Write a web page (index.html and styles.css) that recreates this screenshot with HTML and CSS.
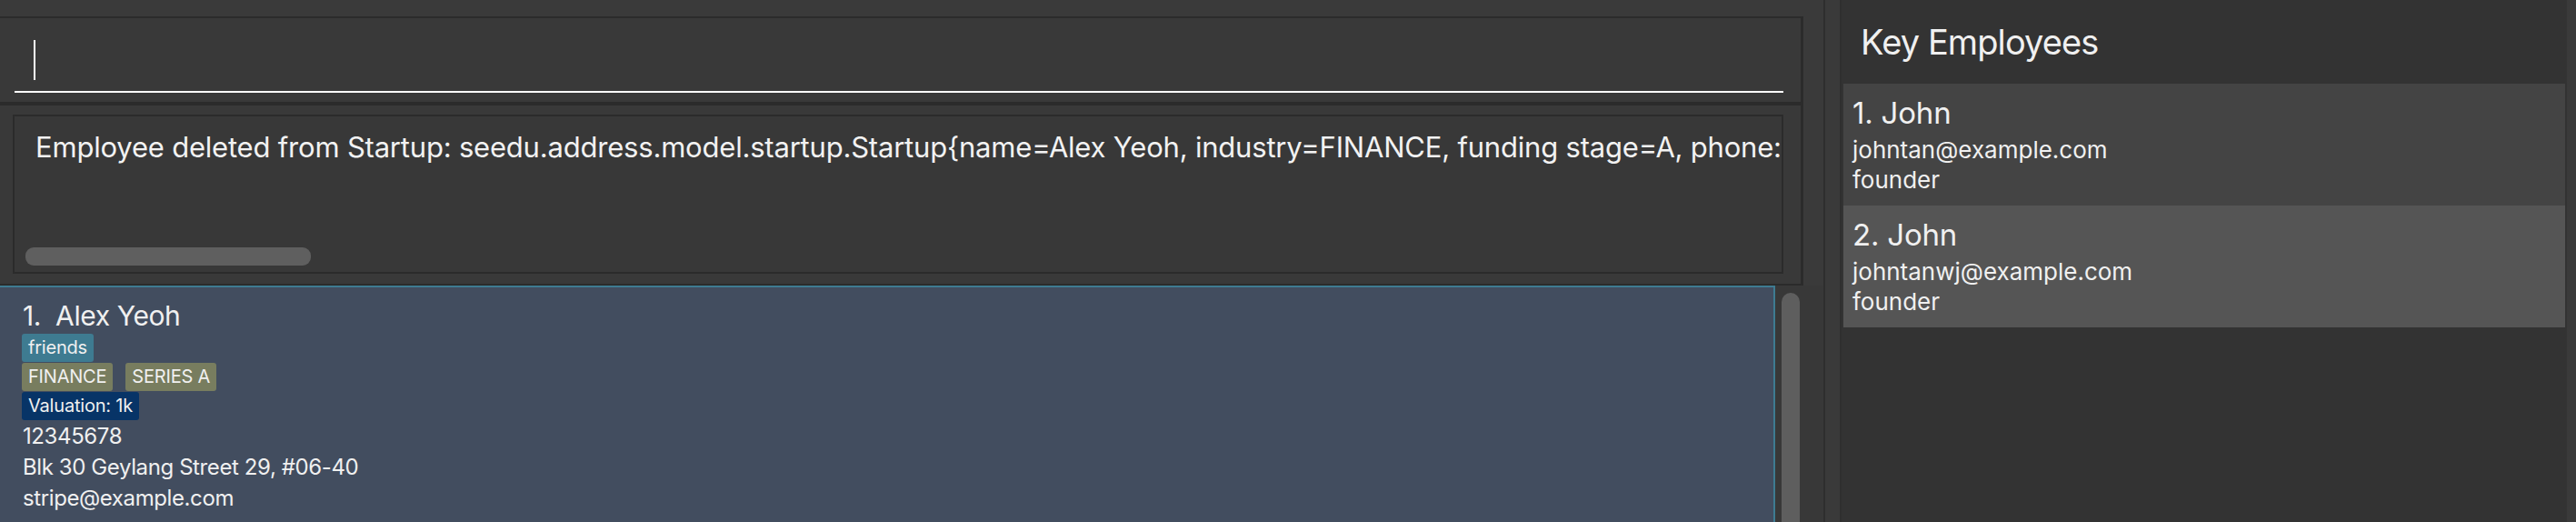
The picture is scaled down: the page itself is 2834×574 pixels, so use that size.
FILE: index.html
```html
<!DOCTYPE html>
<html>
<head>
<meta charset="utf-8">
<link rel="stylesheet" href="styles.css">
</head>
<body>
<div class="app">
  <div class="main-col">
    <div class="top-strip"></div>
    <div class="command-box">
      <div class="command-field"><span class="caret"></span></div>
    </div>
    <div class="result-panel">
      <div class="result-display">
        <div class="result-text">Employee deleted from Startup: seedu.address.model.startup.Startup{name=Alex Yeoh, industry=FINANCE, funding stage=A, phone: 12345678, email: stripe@example.com, address: Blk 30 Geylang Street 29, #06-40, valuation: 1k, tags: [friends]}</div>
        <div class="h-scroll"><div class="h-thumb"></div></div>
      </div>
    </div>
    <div class="list-area">
      <div class="startup-card">
        <div class="card-name">1.  Alex Yeoh</div>
        <div class="tag-row"><span class="tag tag-friend">friends</span></div>
        <div class="tag-row"><span class="tag tag-olive">FINANCE</span><span class="tag tag-olive">SERIES A</span></div>
        <div class="tag-row"><span class="tag tag-navy">Valuation: 1k</span></div>
        <div class="card-line">12345678</div>
        <div class="card-line">Blk 30 Geylang Street 29, #06-40</div>
        <div class="card-line">stripe@example.com</div>
      </div>
      <div class="v-scroll"></div>
    </div>
  </div>
  <div class="divider"></div>
  <div class="gutter"></div>
  <div class="side-panel">
    <div class="side-title">Key Employees</div>
    <div class="emp-card emp-odd">
      <div class="emp-name">1. John</div>
      <div class="emp-line">johntan@example.com</div>
      <div class="emp-line">founder</div>
    </div>
    <div class="emp-card emp-even">
      <div class="emp-name">2. John</div>
      <div class="emp-line">johntanwj@example.com</div>
      <div class="emp-line">founder</div>
    </div>
  </div>
  <div class="edge"></div>
</div>
</body>
</html>
```
FILE: styles.css
```css
html, body {
  margin: 0;
  padding: 0;
  background: #3a3a3a;
  overflow: hidden;
}
body {
  width: 2834px;
  height: 574px;
  font-family: Inter, "Liberation Sans", sans-serif;
  color: #f0f0f0;
}
.app {
  display: flex;
  height: 574px;
  overflow: hidden;
}
.main-col {
  width: 2006px;
  height: 574px;
  flex: none;
  display: flex;
  flex-direction: column;
  background: #3a3a3a;
  overflow: hidden;
}
.top-strip {
  flex: none;
  height: 18px;
  width: 1984px;
}
.command-box {
  flex: none;
  width: 1981px;
  height: 92px;
  background: #393939;
  border-top: 2px solid #2b2b2b;
  border-right: 3px solid #2b2b2b;
  border-bottom: 4px solid #2b2b2b;
}
.command-field {
  margin-left: 16px;
  width: 1946px;
  height: 80px;
  border-bottom: 2px solid #ffffff;
  display: flex;
  align-items: flex-start;
}
.caret {
  display: block;
  width: 2px;
  height: 44px;
  margin-top: 24px;
  margin-left: 21px;
  background: #ffffff;
}
.result-panel {
  flex: none;
  width: 1984px;
  height: 198px;
  box-sizing: border-box;
  background: #393939;
  border-right: 3px solid #2b2b2b;
  border-bottom: 2px solid #2b2b2b;
  padding: 10px 0 0 14px;
}
.result-display {
  width: 1948px;
  height: 175px;
  box-sizing: border-box;
  border: 2px solid #2b2b2b;
  background: #383838;
  overflow: hidden;
  display: flex;
  flex-direction: column;
  justify-content: space-between;
  padding: 14px 0 7px 12px;
}
.result-text {
  font-size: 31px;
  line-height: 40px;
  letter-spacing: -0.2px;
  white-space: nowrap;
  overflow: hidden;
  padding-left: 11px;
  color: #f2f2f2;
}
.h-scroll {
  height: 20px;
}
.h-thumb {
  width: 314px;
  height: 20px;
  border-radius: 9px;
  background: #5f5f5f;
}
.list-area {
  flex: 1;
  min-height: 0;
  display: flex;
  background: #383838;
  gap: 7px;
  overflow: hidden;
}
.startup-card {
  width: 1953px;
  flex: none;
  box-sizing: border-box;
  background: #424d5f;
  border-top: 2px solid #3e7b91;
  border-right: 2px solid #3e7b91;
  padding: 13px 0 0 24px;
  display: flex;
  flex-direction: column;
}
.card-name {
  font-size: 30px;
  line-height: 36px;
  letter-spacing: -0.4px;
  white-space: pre;
  padding-left: 1px;
  margin-bottom: 2px;
}
.tag-row {
  display: flex;
  gap: 14px;
  height: 32px;
}
.tag {
  display: block;
  height: 31px;
  line-height: 31px;
  font-size: 20px;
  letter-spacing: -0.2px;
  padding: 0 7px;
  border-radius: 3px;
  color: #f0f0f0;
}
.tag-friend { background: #3e7b91; }
.tag-olive { background: #787d5f; }
.tag-navy { background: #073467; }
.card-line {
  font-size: 24px;
  line-height: 34px;
  letter-spacing: -0.4px;
  padding-left: 1px;
}
.v-scroll {
  width: 20px;
  height: 280px;
  margin-top: 8px;
  border-radius: 10px;
  background: #5e5e5e;
  flex: none;
}
.divider {
  width: 2px;
  flex: none;
  background: #2e2e2e;
}
.gutter {
  width: 16px;
  flex: none;
  background: #3a3a3a;
  border-right: 2px solid #2f2f2f;
}
.side-panel {
  width: 798px;
  flex: none;
  background: #333333;
  padding: 22px 2px 0 2px;
  box-sizing: border-box;
  display: flex;
  flex-direction: column;
}
.side-title {
  font-size: 38px;
  line-height: 48px;
  letter-spacing: -0.9px;
  padding-left: 19px;
  margin-bottom: 22px;
}
.emp-card {
  height: 134px;
  box-sizing: border-box;
  padding: 12px 0 0 10px;
}
.emp-odd { background: #444444; }
.emp-even { background: #555555; }
.emp-name {
  font-size: 33px;
  line-height: 40px;
  letter-spacing: -0.2px;
  margin-bottom: 4px;
}
.emp-line {
  font-size: 26px;
  line-height: 33px;
}
.edge {
  flex: 1;
  background: #3a3a3a;
}
```
